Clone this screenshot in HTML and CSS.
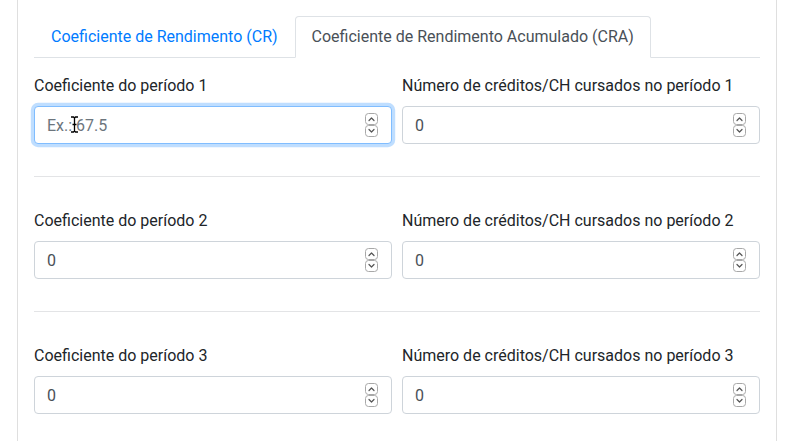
FILE: index.html
```html
<!DOCTYPE html>
<html lang="pt-BR">
<head>
<meta charset="utf-8">
<title>Coeficiente de Rendimento</title>
<link rel="stylesheet" href="styles.css">
</head>
<body>
<div class="page">
  <div class="card">
    <ul class="tabs">
      <li><a class="tab-link" href="#">Coeficiente de Rendimento (CR)</a></li>
      <li><a class="tab-link active" href="#">Coeficiente de Rendimento Acumulado (CRA)</a></li>
    </ul>
    <div class="tab-content">
      <div class="period">
        <div class="field">
          <label class="label">Coeficiente do período 1</label>
          <div class="input-wrap">
            <input class="input focused" type="number" placeholder="Ex.: 67.5">
            <svg class="spin" width="13" height="24" viewBox="0 0 13 24"><rect x="0.5" y="0.5" width="12" height="11" rx="3"/><rect x="0.5" y="12.5" width="12" height="11" rx="3"/><path d="M4 7.5l2.5-2.5 2.5 2.5M4 16.5l2.5 2.5 2.5-2.5"/></svg>
            <svg class="ibeam" width="9" height="17" viewBox="0 0 9 17"><path d="M1 1h2.5l1 1 1-1H8M1 16h2.5l1-1 1 1H8M4.5 2v13M2.5 8.5h4" fill="none" stroke="#fff" stroke-width="3"/><path d="M1 1h2.5l1 1 1-1H8M1 16h2.5l1-1 1 1H8M4.5 2v13M2.5 8.5h4" fill="none" stroke="#000" stroke-width="1.3"/></svg>
          </div>
        </div>
        <div class="field">
          <label class="label">Número de créditos/CH cursados no período 1</label>
          <div class="input-wrap">
            <input class="input" type="number" value="0">
            <svg class="spin" width="13" height="24" viewBox="0 0 13 24"><rect x="0.5" y="0.5" width="12" height="11" rx="3"/><rect x="0.5" y="12.5" width="12" height="11" rx="3"/><path d="M4 7.5l2.5-2.5 2.5 2.5M4 16.5l2.5 2.5 2.5-2.5"/></svg>
          </div>
        </div>
      </div>
      <hr class="sep">
      <div class="period spaced">
        <div class="field">
          <label class="label">Coeficiente do período 2</label>
          <div class="input-wrap">
            <input class="input" type="number" value="0">
            <svg class="spin" width="13" height="24" viewBox="0 0 13 24"><rect x="0.5" y="0.5" width="12" height="11" rx="3"/><rect x="0.5" y="12.5" width="12" height="11" rx="3"/><path d="M4 7.5l2.5-2.5 2.5 2.5M4 16.5l2.5 2.5 2.5-2.5"/></svg>
          </div>
        </div>
        <div class="field">
          <label class="label">Número de créditos/CH cursados no período 2</label>
          <div class="input-wrap">
            <input class="input" type="number" value="0">
            <svg class="spin" width="13" height="24" viewBox="0 0 13 24"><rect x="0.5" y="0.5" width="12" height="11" rx="3"/><rect x="0.5" y="12.5" width="12" height="11" rx="3"/><path d="M4 7.5l2.5-2.5 2.5 2.5M4 16.5l2.5 2.5 2.5-2.5"/></svg>
          </div>
        </div>
      </div>
      <hr class="sep">
      <div class="period spaced">
        <div class="field">
          <label class="label">Coeficiente do período 3</label>
          <div class="input-wrap">
            <input class="input" type="number" value="0">
            <svg class="spin" width="13" height="24" viewBox="0 0 13 24"><rect x="0.5" y="0.5" width="12" height="11" rx="3"/><rect x="0.5" y="12.5" width="12" height="11" rx="3"/><path d="M4 7.5l2.5-2.5 2.5 2.5M4 16.5l2.5 2.5 2.5-2.5"/></svg>
          </div>
        </div>
        <div class="field">
          <label class="label">Número de créditos/CH cursados no período 3</label>
          <div class="input-wrap">
            <input class="input" type="number" value="0">
            <svg class="spin" width="13" height="24" viewBox="0 0 13 24"><rect x="0.5" y="0.5" width="12" height="11" rx="3"/><rect x="0.5" y="12.5" width="12" height="11" rx="3"/><path d="M4 7.5l2.5-2.5 2.5 2.5M4 16.5l2.5 2.5 2.5-2.5"/></svg>
          </div>
        </div>
      </div>
    </div>
  </div>
</div>
</body>
</html>
```
FILE: styles.css
```css
* { box-sizing: border-box; }
html, body { margin: 0; padding: 0; background: #fff; }
body {
  font-family: Roboto, "Liberation Sans", sans-serif;
  font-size: 16px;
  line-height: 1.5;
  color: #212529;
  overflow: hidden;
}
.page { padding-left: 17px; width: 777px; }
.card {
  border: 1px solid #dfdfdf;
  border-top: 0;
  border-bottom: 0;
  padding: 16px 16px 0;
  height: 100vh;
  background: #fff;
}
.tabs {
  list-style: none;
  margin: 0;
  padding: 0;
  display: flex;
  border-bottom: 1px solid #dee2e6;
}
.tabs li { margin-bottom: -1px; }
.tab-link {
  display: block;
  padding: 8px 16px;
  border: 1px solid transparent;
  border-top-left-radius: 4px;
  border-top-right-radius: 4px;
  color: #007bff;
  text-decoration: none;
}
.tab-link.active {
  color: #495057;
  background: #fff;
  border-color: #dee2e6 #dee2e6 #fff;
}
.tab-content { padding-top: 16px; }
.period {
  display: grid;
  grid-template-columns: 1fr 1fr;
  column-gap: 10px;
}
.period.spaced { padding-top: 16px; }
.field { display: flex; flex-direction: column; }
.label { display: block; margin-bottom: 8px; }
.input-wrap { position: relative; }
.input {
  display: block;
  width: 100%;
  height: 38px;
  padding: 6px 12px;
  font-family: inherit;
  font-size: 16px;
  line-height: 1.5;
  color: #495057;
  background: #fff;
  border: 1px solid #ced4da;
  border-radius: 4px;
  outline: none;
  -moz-appearance: textfield;
  appearance: textfield;
}
.input::-webkit-inner-spin-button,
.input::-webkit-outer-spin-button { -webkit-appearance: none; margin: 0; }
.input::placeholder { color: #6c757d; opacity: 1; }
.input.focused {
  border-color: #80bdff;
  box-shadow: 0 0 0 3.2px rgba(0, 123, 255, 0.25);
}
.spin {
  position: absolute;
  right: 14px;
  top: 7px;
  pointer-events: none;
}
.spin rect { fill: #fff; stroke: #a8a8a8; stroke-width: 1; }
.spin path { fill: none; stroke: #555; stroke-width: 1.2; stroke-linecap: round; stroke-linejoin: round; }
.ibeam { position: absolute; left: 36px; top: 10px; }
.sep {
  border: 0;
  border-top: 1px solid #e3e4e6;
  margin: 32px 0 16px;
}
```
